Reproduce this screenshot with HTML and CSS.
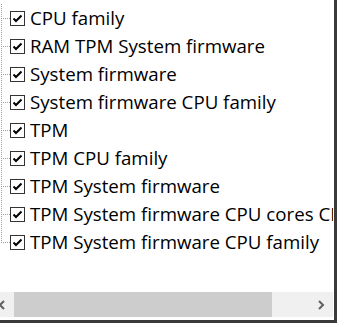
FILE: index.html
```html
<!DOCTYPE html>
<html>
<head>
<meta charset="utf-8">
<link rel="stylesheet" href="styles.css">
</head>
<body>
<div class="window">
  <div class="view">
    <ul class="tree">
      <li class="row"><span class="conn"></span><span class="box"><svg viewBox="0 0 13 13" width="13" height="13"><polyline points="2.5,6.5 5,9 10.5,3.5" /></svg></span><span class="label">CPU family</span></li>
      <li class="row"><span class="conn"></span><span class="box"><svg viewBox="0 0 13 13" width="13" height="13"><polyline points="2.5,6.5 5,9 10.5,3.5" /></svg></span><span class="label">RAM TPM System firmware</span></li>
      <li class="row"><span class="conn"></span><span class="box"><svg viewBox="0 0 13 13" width="13" height="13"><polyline points="2.5,6.5 5,9 10.5,3.5" /></svg></span><span class="label">System firmware</span></li>
      <li class="row"><span class="conn"></span><span class="box"><svg viewBox="0 0 13 13" width="13" height="13"><polyline points="2.5,6.5 5,9 10.5,3.5" /></svg></span><span class="label">System firmware CPU family</span></li>
      <li class="row"><span class="conn"></span><span class="box"><svg viewBox="0 0 13 13" width="13" height="13"><polyline points="2.5,6.5 5,9 10.5,3.5" /></svg></span><span class="label">TPM</span></li>
      <li class="row"><span class="conn"></span><span class="box"><svg viewBox="0 0 13 13" width="13" height="13"><polyline points="2.5,6.5 5,9 10.5,3.5" /></svg></span><span class="label">TPM CPU family</span></li>
      <li class="row"><span class="conn"></span><span class="box"><svg viewBox="0 0 13 13" width="13" height="13"><polyline points="2.5,6.5 5,9 10.5,3.5" /></svg></span><span class="label">TPM System firmware</span></li>
      <li class="row"><span class="conn"></span><span class="box"><svg viewBox="0 0 13 13" width="13" height="13"><polyline points="2.5,6.5 5,9 10.5,3.5" /></svg></span><span class="label">TPM System firmware CPU cores CPU family</span></li>
      <li class="row last"><span class="conn"></span><span class="box"><svg viewBox="0 0 13 13" width="13" height="13"><polyline points="2.5,6.5 5,9 10.5,3.5" /></svg></span><span class="label">TPM System firmware CPU family</span></li>
    </ul>
  </div>
  <div class="hscroll">
    <div class="hs-inner">
      <div class="hs-btn"><svg viewBox="0 0 8 10" width="8" height="10"><polyline points="6,1 2,5 6,9" /></svg></div>
      <div class="hs-track"><div class="hs-thumb"></div></div>
      <div class="hs-btn"><svg viewBox="0 0 8 10" width="8" height="10"><polyline points="2,1 6,5 2,9" /></svg></div>
    </div>
  </div>
</div>
</body>
</html>
```
FILE: styles.css
```css
html, body {
  margin: 0;
  padding: 0;
  background: #ffffff;
}
.window {
  width: 334px;
  height: 320px;
  border-right: 3px solid #3a3a3a;
  border-bottom: 3px solid #3a3a3a;
  background: #ffffff;
  display: flex;
  flex-direction: column;
  overflow: hidden;
}
.view {
  height: 292px;
  overflow: hidden;
  width: 333px;
}
.tree {
  list-style: none;
  margin: 0;
  padding: 4px 0 0 0;
  white-space: nowrap;
}
.row {
  height: 28px;
  display: flex;
  align-items: center;
  font-family: "Open Sans", "Noto Sans", sans-serif;
  font-size: 18.7px;
  color: #000;
}
.conn {
  width: 10px;
  align-self: stretch;
  flex: none;
  background-image:
    repeating-linear-gradient(to bottom, #a0a0a0 0 1px, transparent 1px 2px),
    repeating-linear-gradient(to right, #a0a0a0 0 1px, transparent 1px 2px);
  background-size: 1px 100%, 9px 1px;
  background-position: 1px 0, 1px 14px;
  background-repeat: no-repeat;
}
.last .conn {
  background-size: 1px 15px, 9px 1px;
}
.box {
  width: 13px;
  height: 13px;
  border: 1px solid #333333;
  background: #fff;
  flex: none;
  display: flex;
}
.box svg polyline {
  fill: none;
  stroke: #000;
  stroke-width: 2;
}
.label {
  margin-left: 5px;
  line-height: 24px;
}
.hscroll {
  height: 25px;
  width: 333px;
  overflow: hidden;
  background: #f0f0f0;
}
.hs-inner {
  display: flex;
  height: 100%;
  margin-left: -10px;
  width: 343px;
}
.hs-btn {
  width: 24px;
  flex: none;
  display: flex;
  align-items: center;
  justify-content: center;
}
.hs-btn svg polyline {
  fill: none;
  stroke: #606060;
  stroke-width: 2;
}
.hs-track {
  flex: 1;
  display: flex;
  align-items: stretch;
  padding: 0;
}
.hs-thumb {
  width: 258px;
  background: #cdcdcd;
}
```
